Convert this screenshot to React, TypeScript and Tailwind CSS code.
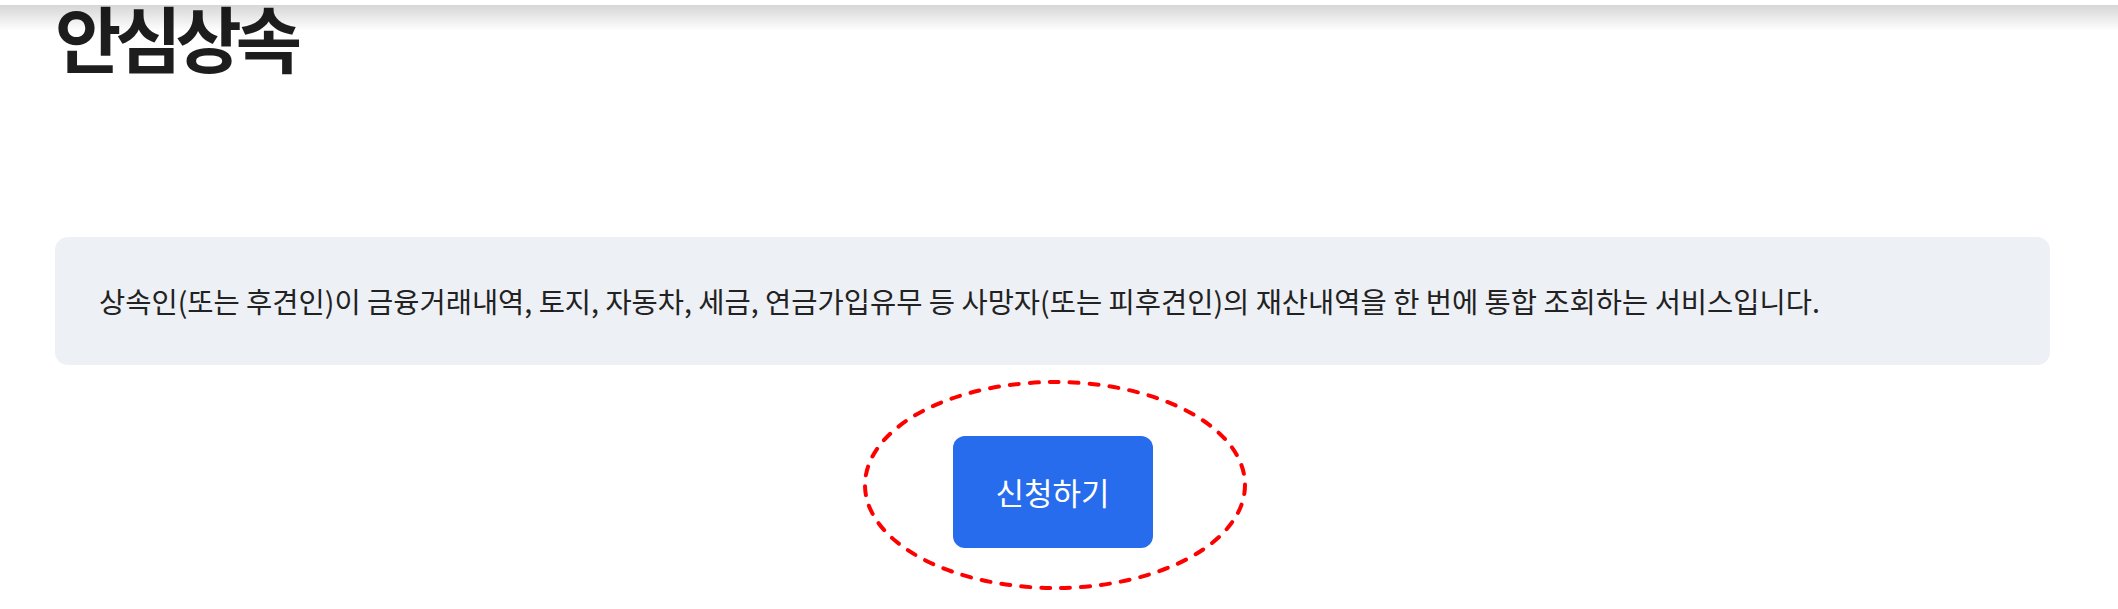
import React from "react";

export default function App() {
  return (
    <div
      className="relative w-full min-h-[609px] bg-white text-[#222222]"
      style={{ fontFamily: '"Noto Sans CJK KR", "Noto Sans", sans-serif' }}
    >
      {/* fixed header shadow */}
      <div className="pointer-events-none absolute left-0 right-0 top-0 z-10">
        <div className="h-[5px] bg-white" />
        <div className="h-[26px] bg-gradient-to-b from-[rgba(0,0,0,0.16)] to-[rgba(0,0,0,0)]" />
      </div>

      <div className="pl-[55px] pr-[68px]">
        <h1 className="mt-[0px] text-[72px] leading-[72px] font-bold tracking-[-6px] text-[#1d1d1d]">
          안심상속
        </h1>

        <div className="mt-[165px] flex h-[128px] items-center rounded-[13px] bg-[#edf0f5] pl-[44px]">
          <p className="text-[28.5px] leading-none text-[#222222]">
            상속인(또는 후견인)이 금융거래내역, 토지, 자동차, 세금, 연금가입유무 등 사망자(또는 피후견인)의 재산내역을 한 번에 통합 조회하는 서비스입니다.
          </p>
        </div>

        <div className="mt-[71px] flex justify-center">
          <div className="relative">
            <button className="flex h-[112px] w-[200px] items-center justify-center rounded-[12px] bg-[#266ced] text-[31px] text-white">
              신청하기
            </button>
            <svg
              className="pointer-events-none absolute left-[-90px] top-[-56px]"
              width="384"
              height="210"
              viewBox="0 0 384 210"
            >
              <ellipse
                cx="192"
                cy="105"
                rx="190"
                ry="103"
                fill="none"
                stroke="#ff0000"
                strokeWidth="4"
                strokeDasharray="9 11"
                strokeLinecap="round"
              />
            </svg>
          </div>
        </div>
      </div>
    </div>
  );
}
